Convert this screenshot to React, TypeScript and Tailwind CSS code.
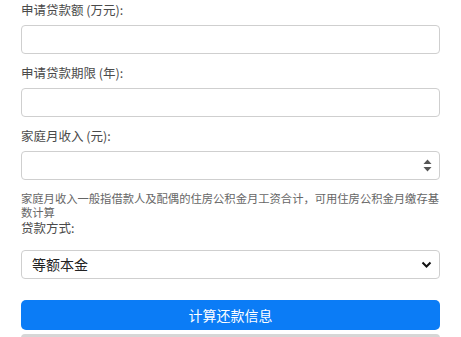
const fieldBox =
  "block w-full h-[29px] rounded-[4px] border border-[#cfcfcf] bg-white px-[10px] text-[14px] text-[#222] outline-none";

const Label = ({ children, className = "" }: { children: React.ReactNode; className?: string }) => (
  <label className={`block text-[12.5px] leading-[18px] text-[#4a4a4a] ${className}`}>{children}</label>
);

export default function App() {
  return (
    <div
      className="min-h-screen overflow-hidden bg-white px-[21px] pt-[1px]"
      style={{ fontFamily: '"Noto Sans CJK SC", "Liberation Sans", sans-serif' }}
    >
      <Label>申请贷款额 (万元):</Label>
      <input type="text" className={`${fieldBox} mt-[6px]`} />

      <Label className="mt-[10px]">申请贷款期限 (年):</Label>
      <input type="text" className={`${fieldBox} mt-[6px]`} />

      <Label className="mt-[10px]">家庭月收入 (元):</Label>
      <div className="relative mt-[6px]">
        <input type="text" className={fieldBox} />
        <svg
          className="absolute right-[8px] top-[8px]"
          width="9"
          height="13"
          viewBox="0 0 9 13"
        >
          <path d="M4.5 0.5 L8.5 5 L0.5 5 Z" fill="#555" />
          <path d="M4.5 12.5 L8.5 8 L0.5 8 Z" fill="#555" />
        </svg>
      </div>

      <p className="mt-[11px] text-[11.3px] leading-[14px] text-[#666]">
        家庭月收入一般指借款人及配偶的住房公积金月工资合计，可用住房公积金月缴存基数计算
      </p>
      <Label className="leading-[14px]">贷款方式:</Label>

      <div className="relative mt-[13px]">
        <select className={`${fieldBox} appearance-none`} defaultValue="等额本金">
          <option>等额本金</option>
          <option>等额本息</option>
        </select>
        <svg
          className="pointer-events-none absolute right-[8px] top-[10px]"
          width="11"
          height="9"
          viewBox="0 0 11 9"
        >
          <path d="M1.5 2.5 L5.5 6.5 L9.5 2.5" fill="none" stroke="#111" strokeWidth="2" />
        </svg>
      </div>

      <button
        type="button"
        className="mt-[21px] block h-[30px] w-full rounded-[5px] bg-[#0b7cf6] text-[14px] text-white"
      >
        计算还款信息
      </button>

      <div className="mt-[4px] h-[10px] w-full rounded-t-[4px] bg-[#d6d6d6]" />
    </div>
  );
}
